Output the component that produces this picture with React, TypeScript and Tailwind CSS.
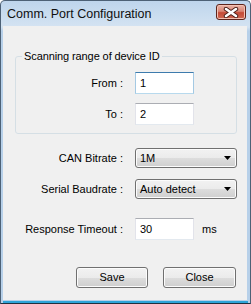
const font = { fontFamily: '"Liberation Sans", Arial, sans-serif' };

const btn =
  'rounded-[3px] border border-[#707070] bg-[linear-gradient(to_bottom,#f2f2f2_0%,#ebebeb_50%,#dddddd_50%,#cfcfcf_100%)] shadow-[inset_0_0_0_1px_#fcfcfc]';

function TextBox({ value, hot = false }: { value: string; hot?: boolean }) {
  const edge = hot
    ? 'border-t-[#3d7bad] border-x-[#a4c9e3] border-b-[#b7d9ed]'
    : 'border-t-[#abadb3] border-x-[#e2e3ea] border-b-[#e3e9ef]';
  return (
    <div className={`flex h-[22px] w-[59px] items-center border bg-white pl-[4px] ${edge}`}>
      {value}
    </div>
  );
}

function Combo({ value }: { value: string }) {
  return (
    <div className={`flex h-[20px] w-[102px] items-center justify-between pl-[4px] pr-[4px] ${btn}`}>
      <span>{value}</span>
      <svg width="7" height="4" viewBox="0 0 7 4" className="mr-[1px]">
        <path d="M0 0h7L3.5 4z" fill="#000" />
      </svg>
    </div>
  );
}

function Row({
  label,
  width,
  children,
}: {
  label: string;
  width: number;
  children: React.ReactNode;
}) {
  return (
    <div className="flex items-center gap-[12px]">
      <div className="text-right" style={{ width }}>
        {label}
      </div>
      {children}
    </div>
  );
}

export default function App() {
  return (
    <div
      className="flex h-[304px] w-[251px] flex-col overflow-hidden rounded-t-[5px] border border-[#4d6176] border-b-[#22313f] bg-[linear-gradient(to_bottom,#bed5ec,#d4e3f2_26px,#b7d0e9_30px)] text-[11px] text-black"
      style={font}
    >
      <div className="flex h-[25px] shrink-0 items-start justify-between pl-[6px] pr-[4px]">
        <span className="mt-[4px] text-[12.5px] text-[#101010]">Comm. Port Configuration</span>
        <div className="mt-[3px] flex h-[16px] w-[30px] items-center justify-center rounded-[3px] border border-[#5e241b] bg-[linear-gradient(to_bottom,#eab3a6_0%,#d98574_45%,#c44a36_55%,#cf6a55_100%)] shadow-[inset_0_0_0_1px_#f3c1b3]">
          <svg width="16" height="11" viewBox="0 0 16 11">
            <path d="M3 2l10 7M13 2L3 9" stroke="#4a1e17" strokeWidth="4.4" strokeLinecap="round" />
            <path d="M3 2l10 7M13 2L3 9" stroke="#fff" strokeWidth="2.6" strokeLinecap="round" />
          </svg>
        </div>
      </div>

      <div className="mx-[2px] mr-[3px] flex flex-1 flex-col bg-[#f0f0f0] pl-[12px] pr-[10px]">
        <fieldset className="mt-[24px] w-[222px] rounded-[3px] border border-[#d5dfe5] pb-[8px] pt-[9px]">
          <legend className="ml-[6px] px-[2px] leading-[13px] tracking-[-0.1px]">Scanning range of device ID</legend>
          <div className="flex flex-col gap-[9px]">
            <Row label="From :" width={107}>
              <TextBox value="1" hot />
            </Row>
            <Row label="To :" width={107}>
              <TextBox value="2" />
            </Row>
          </div>
        </fieldset>

        <div className="mt-[14px] flex flex-col gap-[11px]">
          <Row label="CAN Bitrate :" width={108}>
            <Combo value="1M" />
          </Row>
          <Row label="Serial Baudrate :" width={108}>
            <Combo value="Auto detect" />
          </Row>
        </div>

        <div className="mt-[19px]">
          <Row label="Response Timeout :" width={108}>
            <TextBox value="30" />
            <span className="-ml-[4px]">ms</span>
          </Row>
        </div>

        <div className="ml-[61px] mt-[27px] flex gap-[15px]">
          <button className={`h-[21px] w-[72px] ${btn}`}>Save</button>
          <button className={`h-[21px] w-[73px] ${btn}`}>Close</button>
        </div>
      </div>
      <div className="mx-[2px] mt-[1px] h-[2px] shrink-0 bg-[#2fa4d9]" />
    </div>
  );
}
